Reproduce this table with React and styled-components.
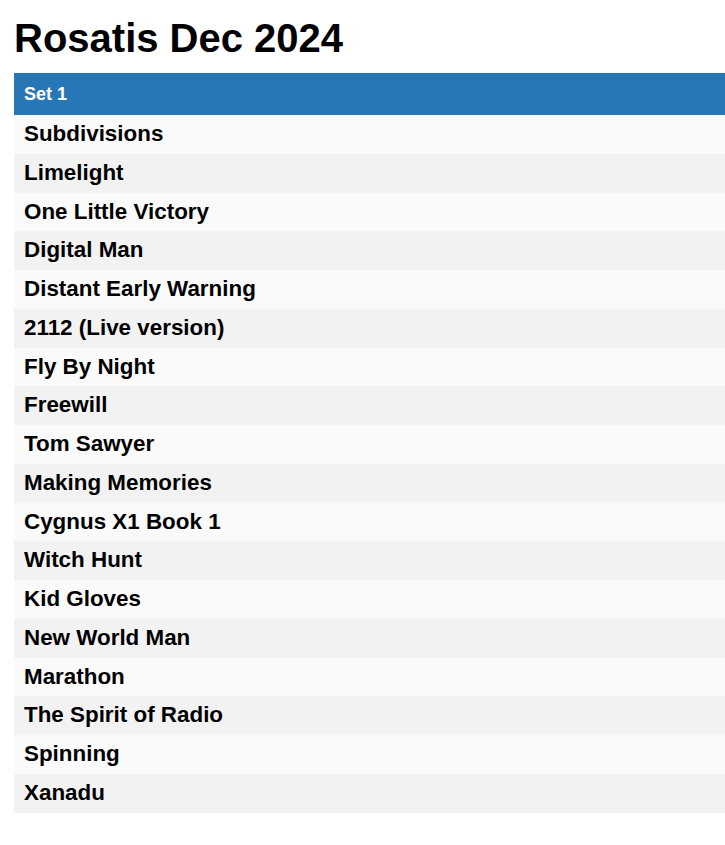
import React from 'react'
import styled, { createGlobalStyle } from 'styled-components'

const GlobalStyle = createGlobalStyle`
  html, body {
    margin: 0;
    padding: 0;
    background: #fff;
    overflow: hidden;
  }
  body {
    font-family: 'Liberation Sans', Arial, sans-serif;
    color: #000;
  }
`

const Page = styled.div`
  padding: 15px 0 0 14px;
`

const Title = styled.h1`
  margin: 0 0 12px 0;
  font-size: 40px;
  font-weight: bold;
  line-height: 46px;
`

const Table = styled.table`
  width: 100%;
  border-collapse: collapse;
`

const Th = styled.th`
  background-color: #2777b7;
  color: #fff;
  text-align: left;
  font-size: 18px;
  font-weight: bold;
  height: 42px;
  padding: 0 10px;
  box-sizing: border-box;
`

const Tr = styled.tr`
  background-color: ${(props) => (props.$even ? '#f2f2f2' : '#fafafa')};
`

const Td = styled.td`
  font-size: 22.4px;
  font-weight: bold;
  padding: 6px 10px 7px;
  line-height: 25.75px;
`

const songs = [
  'Subdivisions',
  'Limelight',
  'One Little Victory',
  'Digital Man',
  'Distant Early Warning',
  '2112 (Live version)',
  'Fly By Night',
  'Freewill',
  'Tom Sawyer',
  'Making Memories',
  'Cygnus X1 Book 1',
  'Witch Hunt',
  'Kid Gloves',
  'New World Man',
  'Marathon',
  'The Spirit of Radio',
  'Spinning',
  'Xanadu',
]

const App = () => {
  return (
    <Page>
      <GlobalStyle />
      <Title>Rosatis Dec 2024</Title>
      <Table>
        <thead>
          <tr>
            <Th>Set 1</Th>
          </tr>
        </thead>
        <tbody>
          {songs.map((song, i) => (
            <Tr key={i} $even={i % 2 === 1}>
              <Td>{song}</Td>
            </Tr>
          ))}
        </tbody>
      </Table>
    </Page>
  )
}

export default App
